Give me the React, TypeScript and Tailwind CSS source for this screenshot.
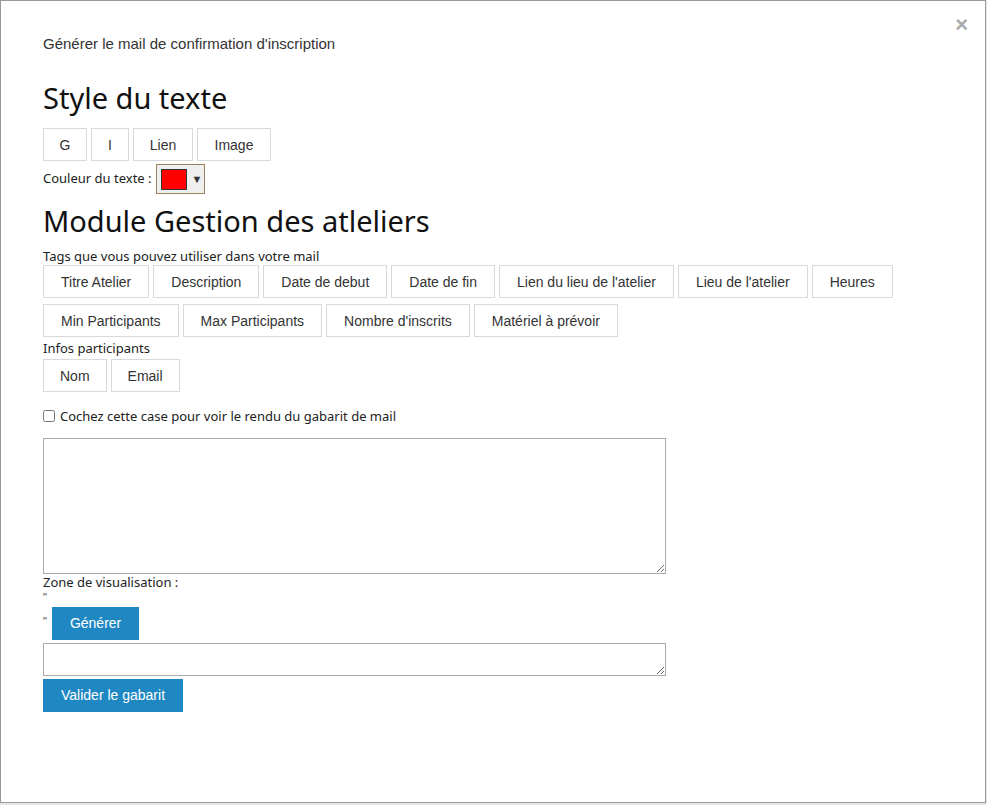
import React from "react";

const Btn = ({ children, className = "" }: { children: React.ReactNode; className?: string }) => (
  <button
    type="button"
    className={`h-[33px] border border-[#d9d9d9] bg-white px-[17px] text-[14px] text-[#333] font-['Liberation_Sans',Arial,sans-serif] leading-[20px] ${className}`}
  >
    {children}
  </button>
);

export default function App() {
  const row1 = ["Titre Atelier", "Description", "Date de debut", "Date de fin", "Lien du lieu de l'atelier", "Lieu de l'atelier", "Heures"];
  const row2 = ["Min Participants", "Max Participants", "Nombre d'inscrits", "Matériel à prévoir"];
  return (
    <div className="w-[987px] h-[805px] bg-[#e6e6e6] overflow-hidden">
      <div className="relative w-[986px] h-[803px] bg-white border border-[#999] font-['Noto_Sans',sans-serif] text-[#222]">
        <span className="absolute right-[17px] top-[13px] text-[22px] font-bold text-[#aaa] font-['Liberation_Sans',Arial,sans-serif] leading-none">×</span>
        <div className="pl-[42px] pt-[33px]">
          <div className="text-[15px] leading-[20px] text-[#333] font-['Liberation_Sans',Arial,sans-serif]">
            Générer le mail de confirmation d'inscription
          </div>
          <h1 className="mt-[26px] text-[29px] leading-[36px] text-[#111]">Style du texte</h1>
          <div className="mt-[12px] flex gap-[4px]">
            <Btn className="w-[44px] !px-0">G</Btn>
            <Btn className="w-[38px] !px-0">I</Btn>
            <Btn className="w-[60px] !px-0">Lien</Btn>
            <Btn className="w-[74px] !px-0">Image</Btn>
          </div>
          <div className="mt-[3px] flex items-center gap-[4px] text-[13px]">
            <span>Couleur du texte :</span>
            <div className="flex items-center h-[30px] w-[49px] border border-[#a0805c] bg-[#efefef] pl-[4px]">
              <div className="w-[26px] h-[21px] bg-[#ff0000] border border-[#333]" />
              <span className="ml-[5px] text-[11px] text-[#333]">▼</span>
            </div>
          </div>
          <h1 className="mt-[9px] text-[29px] leading-[36px] text-[#111]">Module Gestion des atleliers</h1>
          <div className="mt-[8px] text-[13px] leading-[18px]">Tags que vous pouvez utiliser dans votre mail</div>
          <div className="flex gap-[4px]">
            {row1.map((t) => (
              <Btn key={t}>{t}</Btn>
            ))}
          </div>
          <div className="mt-[6px] flex gap-[4px]">
            {row2.map((t) => (
              <Btn key={t}>{t}</Btn>
            ))}
          </div>
          <div className="mt-[2px] text-[13px] leading-[18px]">Infos participants</div>
          <div className="mt-[2px] flex gap-[4px]">
            <Btn className="!px-[16px]">Nom</Btn>
            <Btn className="!px-[16px]">Email</Btn>
          </div>
          <label className="mt-[15px] flex items-center gap-[5px] text-[13px] leading-[18px]">
            <input type="checkbox" className="w-[12px] h-[12px] m-0" />
            <span>Cochez cette case pour voir le rendu du gabarit de mail</span>
          </label>
          <textarea className="mt-[13px] block w-[623px] h-[136px] border border-[#a9a9a9]" />
          <div className="text-[13px] leading-[14px] mt-[1px]">Zone de visualisation :</div>
          <div className="mt-[2px] text-[11px] leading-[12px] text-[#444] font-['Liberation_Sans',Arial,sans-serif]">"</div>
          <div className="mt-[4px] flex items-start text-[11px] text-[#444] font-['Liberation_Sans',Arial,sans-serif]">
            <span className="mr-[5px] mt-[8px] leading-[12px]">"</span>
            <button type="button" className="h-[33px] px-[18px] bg-[#1f88c2] text-white text-[14px] font-['Liberation_Sans',Arial,sans-serif]">
              Générer
            </button>
          </div>
          <textarea className="mt-[3px] block w-[623px] h-[33px] border border-[#a9a9a9]" />
          <button type="button" className="mt-[3px] h-[33px] px-[18px] bg-[#1f88c2] text-white text-[14px] font-['Liberation_Sans',Arial,sans-serif]">
            Valider le gabarit
          </button>
        </div>
      </div>
    </div>
  );
}
